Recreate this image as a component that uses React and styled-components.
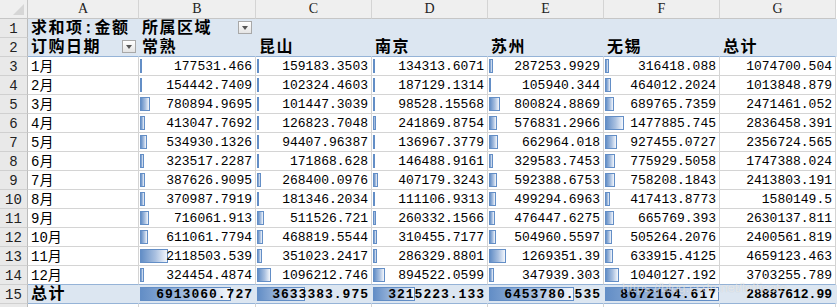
import React from 'react'
import styled, { createGlobalStyle } from 'styled-components'

const GlobalStyle = createGlobalStyle`
  html, body {
    margin: 0;
    padding: 0;
    overflow: hidden;
    background: #ffffff;
  }
`

const MONO = `"Liberation Mono", "Noto Sans CJK SC", monospace`

const Sheet = styled.div`
  position: relative;
  width: 837px;
  font-family: ${MONO};
  color: #000;
  background: #fff;
`

const Row = styled.div`
  display: grid;
  grid-template-columns: 28px 111px 117px repeat(5, 116px);
  height: 19px;
  background: ${p => (p.$blue ? '#dce6f1' : '#ffffff')};
`

const Corner = styled.div`
  position: relative;
  background: #efefef;
  border-right: 1px solid #c6c6c6;
  border-bottom: 1px solid #c6c6c6;
  box-sizing: border-box;

  &::after {
    content: '';
    position: absolute;
    right: 3px;
    bottom: 3px;
    width: 0;
    height: 0;
    border-left: 11px solid transparent;
    border-bottom: 11px solid #d6d6d6;
  }
`

const ColHead = styled.div`
  background: #efefef;
  border-right: 1px solid #d4d4d4;
  border-bottom: 1px solid #c6c6c6;
  box-sizing: border-box;
  font-family: "Liberation Serif", serif;
  font-size: 14px;
  line-height: 18px;
  text-align: center;
  color: #222;
`

const RowHead = styled.div`
  background: #e9e9e9;
  border-right: 1px solid #bcbcbc;
  border-bottom: 1px solid #d0d0d0;
  box-sizing: border-box;
  display: flex;
  align-items: flex-end;
  justify-content: center;
  font-size: 14px;
  line-height: 16px;
  color: #222;
`

const Cell = styled.div`
  position: relative;
  box-sizing: border-box;
  display: flex;
  align-items: flex-end;
  justify-content: ${p => (p.$right ? 'flex-end' : 'flex-start')};
  padding: ${p => (p.$right ? '0 3px 0 0' : '0 0 0 3px')};
  border-right: 1px solid ${p => (p.$plain ? 'transparent' : '#d4d4d4')};
  border-bottom: 1px solid ${p => p.$line || '#d4d4d4'};
  font-size: ${p => (p.$head ? '16px' : '14px')};
  font-weight: ${p => (p.$bold ? 700 : 400)};
  line-height: ${p => (p.$head ? '15px' : '16px')};
  letter-spacing: ${p => p.$spacing || '0'};
  white-space: nowrap;
  overflow: visible;
`

const Num = styled.span`
  position: relative;
  font-size: 13px;
  letter-spacing: ${p => (p.$wide ? '1px' : '0')};
  margin-right: ${p => (p.$wide ? '-1px' : '0')};
`

const DataBar = styled.div`
  position: absolute;
  left: 1px;
  top: 2px;
  bottom: 2px;
  box-sizing: border-box;
  border: 1px solid #638ec6;
  background: linear-gradient(to right, #638ec6 0%, #a9c0e0 55%, #f4f7fc 100%);
`

const Dropdown = styled.div`
  position: absolute;
  right: ${p => p.$right}px;
  top: 2px;
  width: 14px;
  height: 13px;
  box-sizing: border-box;
  border: 1px solid #a8a8a8;
  background: linear-gradient(#ffffff, #e4e4e4);

  &::after {
    content: '';
    position: absolute;
    left: 3px;
    top: 4px;
    border-left: 3.5px solid transparent;
    border-right: 3.5px solid transparent;
    border-top: 4px solid #555;
  }
`

const Watermark = styled.div`
  position: absolute;
  left: 622px;
  top: 280px;
  font-family: "Liberation Sans", sans-serif;
  font-size: 13px;
  color: rgba(255, 255, 255, 0.55);
  text-shadow: 0 0 1px rgba(90, 90, 90, 0.25);
  pointer-events: none;
`

const letters = ['A', 'B', 'C', 'D', 'E', 'F', 'G']
const regions = ['常熟', '昆山', '南京', '苏州', '无锡', '总计']

const rows = [
  ['1月', '177531.466', '159183.3503', '134313.6071', '287253.9929', '316418.088', '1074700.504'],
  ['2月', '154442.7409', '102324.4603', '187129.1314', '105940.344', '464012.2024', '1013848.879'],
  ['3月', '780894.9695', '101447.3039', '98528.15568', '800824.8869', '689765.7359', '2471461.052'],
  ['4月', '413047.7692', '126823.7048', '241869.8754', '576831.2966', '1477885.745', '2836458.391'],
  ['5月', '534930.1326', '94407.96387', '136967.3779', '662964.018', '927455.0727', '2356724.565'],
  ['6月', '323517.2287', '171868.628', '146488.9161', '329583.7453', '775929.5058', '1747388.024'],
  ['7月', '387626.9095', '268400.0976', '407179.3243', '592388.6753', '758208.1843', '2413803.191'],
  ['8月', '370987.7919', '181346.2034', '111106.9313', '499294.6963', '417413.8773', '1580149.5'],
  ['9月', '716061.913', '511526.721', '260332.1566', '476447.6275', '665769.393', '2630137.811'],
  ['10月', '611061.7794', '468819.5544', '310455.7177', '504960.5597', '505264.2076', '2400561.819'],
  ['11月', '2118503.539', '351023.2417', '286329.8801', '1269351.39', '633915.4125', '4659123.463'],
  ['12月', '324454.4874', '1096212.746', '894522.0599', '347939.303', '1040127.192', '3703255.789'],
]

const totals = ['6913060.727', '3633383.975', '3215223.133', '6453780.535', '8672164.617', '28887612.99']

const MAX = 8672164.617
const barWidth = (v, full) => Math.max(2, (parseFloat(v) / MAX) * full)

const App = () => (
  <Sheet>
    <GlobalStyle />
    <Row>
      <Corner />
      {letters.map(l => (
        <ColHead key={l}>{l}</ColHead>
      ))}
    </Row>

    <Row $blue>
      <RowHead>1</RowHead>
      <Cell $plain $line="transparent" $head $bold $spacing="1.5px">求和项:金额</Cell>
      <Cell $plain $line="transparent" $head $bold $spacing="1.5px">
        所属区域
        <Dropdown $right={3} />
      </Cell>
      {[0, 1, 2, 3, 4].map(i => (
        <Cell key={i} $plain $line="transparent" />
      ))}
    </Row>

    <Row $blue>
      <RowHead>2</RowHead>
      <Cell $plain $line="#95b3d7" $head $bold $spacing="1.5px">
        订购日期
        <Dropdown $right={2} />
      </Cell>
      {regions.map(r => (
        <Cell key={r} $plain $line="#95b3d7" $head $bold $spacing="1.5px">{r}</Cell>
      ))}
    </Row>

    {rows.map((r, i) => (
      <Row key={r[0]}>
        <RowHead>{i + 3}</RowHead>
        <Cell $line={i === rows.length - 1 ? '#95b3d7' : undefined}>{r[0]}</Cell>
        {r.slice(1).map((v, j) => (
          <Cell key={j} $right $line={i === rows.length - 1 ? '#95b3d7' : undefined}>
            {j < 5 && <DataBar style={{ width: barWidth(v, 114) }} />}
            <Num>{v}</Num>
          </Cell>
        ))}
      </Row>
    ))}

    <Row $blue>
      <RowHead>15</RowHead>
      <Cell $plain $line="#95b3d7" $head $bold $spacing="1.5px">总计</Cell>
      {totals.map((v, j) => (
        <Cell key={j} $right $plain $line="#95b3d7" $bold>
          {j < 5 && <DataBar style={{ width: barWidth(v, 114) }} />}
          <Num $wide={j < 5}>{v}</Num>
        </Cell>
      ))}
    </Row>

    <Row>
      <RowHead />
      {letters.map(l => (
        <Cell key={l} />
      ))}
    </Row>

    <Watermark>https://blog.csdn.net/lofticate</Watermark>
  </Sheet>
)

export default App
